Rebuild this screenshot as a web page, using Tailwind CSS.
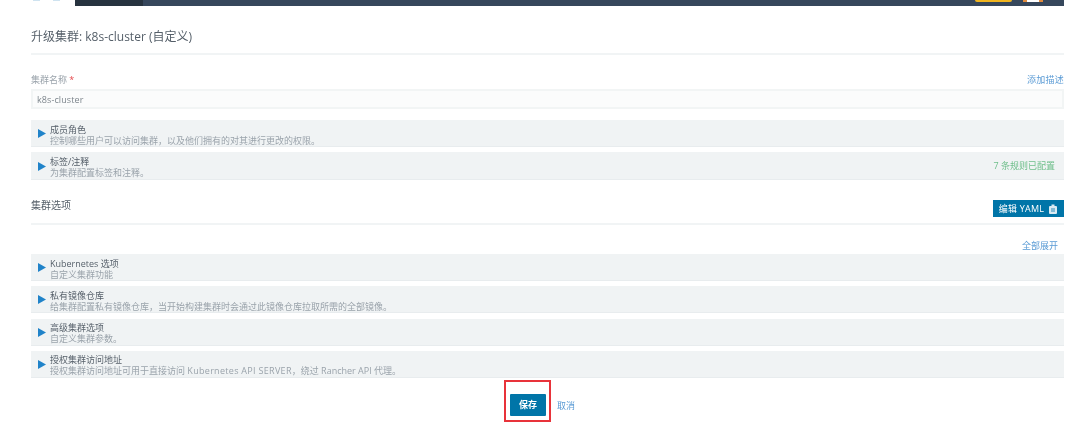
<!DOCTYPE html>
<html lang="en">
<head>
  <meta charset="UTF-8" />
  <title>升级集群</title>
  <script src="https://cdn.jsdelivr.net/npm/@tailwindcss/browser@4"></script>
</head>
<body class="bg-white h-[439px] overflow-hidden font-['Open_Sans','Noto_Sans_CJK_SC',sans-serif] text-[#4b5563]">
<div class="blur-[0.4px]">

  <!-- Top bar -->
  <div class="flex h-[6px]">
    <div class="w-[75px] flex gap-[13px] pl-[33px]">
      <span class="w-[7px] h-[1px] bg-[#cfe3f0]"></span>
      <span class="w-[7px] h-[1px] bg-[#cfe3f0]"></span>
    </div>
    <div class="w-[68px] bg-[#27333f]"></div>
    <div class="w-[921px] bg-[#36475c] flex justify-end pr-[21px] gap-[11px]">
      <span class="w-[37px] h-[2px] bg-[#f0b41e] rounded-b"></span>
      <span class="w-[20px] h-[2px] bg-[#e08a3c] flex justify-center"><span class="w-[12px] bg-white"></span></span>
    </div>
  </div>

  <main class="w-[1033px] ml-[31px]">
    <!-- Title -->
    <div class="h-[49px] pt-[22px] border-b-2 border-[#f1f4f5]">
      <h1 class="text-[12px] leading-[17px] text-[#555f69]">升级集群: k8s-cluster (自定义)</h1>
    </div>

    <!-- Cluster name -->
    <div class="flex justify-between items-center mt-[16px] h-[17px] text-[9px]">
      <span class="text-[#9aa3ab]">集群名称 <span class="text-[#e5484d]">*</span></span>
      <a class="text-[#5a9bd5] tracking-[0.25px]">添加描述</a>
    </div>
    <div class="h-[20px] mt-[1px] px-[4px] border-2 border-[#f2f5f5] bg-[#fbfcfc] text-[9px] leading-[18px] text-[#7d858c] tracking-[0.1px]">k8s-cluster</div>

    <!-- Access sections -->
    <section class="mt-[11px] flex flex-col gap-[5px]">
      <div class="h-[27px] bg-[#f0f3f4] border-b border-[#e8ecee] flex items-center pl-[7px] pt-[3px]">
        <svg class="w-[8px] h-[9px] mr-[4px] mb-[2px] text-[#2083c9]" viewBox="0 0 8 9"><path fill="currentColor" d="M0 0l8 4.5L0 9z"/></svg>
        <div class="text-[9px] leading-[11px]"><div class="text-[#555f69]">成员角色</div><div class="text-[#9aa3ab]">控制哪些用户可以访问集群，以及他们拥有的对其进行更改的权限。</div></div>
      </div>
      <div class="h-[28px] bg-[#f0f3f4] border-b border-[#e8ecee] flex items-center pl-[7px] pt-[3px]">
        <svg class="w-[8px] h-[9px] mr-[4px] mb-[2px] text-[#2083c9]" viewBox="0 0 8 9"><path fill="currentColor" d="M0 0l8 4.5L0 9z"/></svg>
        <div class="text-[9px] leading-[11px]"><div class="text-[#555f69]">标签/注释</div><div class="text-[#9aa3ab]">为集群配置标签和注释。</div></div>
        <span class="ml-auto mr-[9px] mb-[2px] text-[9px] text-[#6fbf8b]">7 条规则已配置</span>
      </div>
    </section>

    <!-- Cluster options -->
    <div class="flex justify-between items-start h-[45px] border-b-2 border-[#f1f4f5]">
      <h2 class="text-[10px] leading-[14px] mt-[18px] text-[#555f69]">集群选项</h2>
      <button class="h-[17px] mt-[20px] w-[71px] bg-[#0075a8] text-white text-[9px] flex items-center justify-center gap-[4px] tracking-[0.2px]">
        <span>编辑 YAML</span>
        <svg class="w-[10px] h-[10px]" viewBox="0 0 10 10"><path fill="currentColor" fill-opacity="0.85" d="M2 2h6a1 1 0 0 1 1 1v6a1 1 0 0 1-1 1H2a1 1 0 0 1-1-1V3a1 1 0 0 1 1-1zM3.5 0.5h3v2h-3z"/><path fill="none" stroke="#0075a8" stroke-width="0.8" d="M3 5h4M3 7h4"/></svg>
      </button>
    </div>
    <div class="flex justify-end h-[29px] pr-[6px] pt-[13px] text-[9px] leading-[16px]"><a class="text-[#5a9bd5]">全部展开</a></div>

    <section class="flex flex-col gap-[5.33px]">
      <div class="h-[27px] bg-[#f0f3f4] border-b border-[#e8ecee] flex items-center pl-[7px] pt-[3px]">
        <svg class="w-[8px] h-[9px] mr-[4px] mb-[2px] text-[#2083c9]" viewBox="0 0 8 9"><path fill="currentColor" d="M0 0l8 4.5L0 9z"/></svg>
        <div class="text-[9px] leading-[11px]"><div class="text-[#555f69]">Kubernetes 选项</div><div class="text-[#9aa3ab]">自定义集群功能</div></div>
      </div>
      <div class="h-[27px] bg-[#f0f3f4] border-b border-[#e8ecee] flex items-center pl-[7px] pt-[3px]">
        <svg class="w-[8px] h-[9px] mr-[4px] mb-[2px] text-[#2083c9]" viewBox="0 0 8 9"><path fill="currentColor" d="M0 0l8 4.5L0 9z"/></svg>
        <div class="text-[9px] leading-[11px]"><div class="text-[#555f69]">私有镜像仓库</div><div class="text-[#9aa3ab]">给集群配置私有镜像仓库，当开始构建集群时会通过此镜像仓库拉取所需的全部镜像。</div></div>
      </div>
      <div class="h-[27px] bg-[#f0f3f4] border-b border-[#e8ecee] flex items-center pl-[7px] pt-[3px]">
        <svg class="w-[8px] h-[9px] mr-[4px] mb-[2px] text-[#2083c9]" viewBox="0 0 8 9"><path fill="currentColor" d="M0 0l8 4.5L0 9z"/></svg>
        <div class="text-[9px] leading-[11px]"><div class="text-[#555f69]">高级集群选项</div><div class="text-[#9aa3ab]">自定义集群参数。</div></div>
      </div>
      <div class="h-[27px] bg-[#f0f3f4] border-b border-[#e8ecee] flex items-center pl-[7px] pt-[3px]">
        <svg class="w-[8px] h-[9px] mr-[4px] mb-[2px] text-[#2083c9]" viewBox="0 0 8 9"><path fill="currentColor" d="M0 0l8 4.5L0 9z"/></svg>
        <div class="text-[9px] leading-[11px]"><div class="text-[#555f69]">授权集群访问地址</div><div class="text-[#9aa3ab]">授权集群访问地址可用于直接访问 <span class="tracking-[0.3px]">Kubernetes API SERVER</span>，绕过 Rancher API 代理。</div></div>
      </div>
    </section>

    <!-- Actions -->
    <div class="flex items-start mt-[2px] ml-[473px]">
      <div class="w-[47px] h-[42px] border-2 border-[#e8333a] pl-[4px] pt-[12px]">
        <button class="block w-[36px] h-[22px] rounded-[1px] bg-[#0075a8] text-white text-[9px] font-semibold">保存</button>
      </div>
      <a class="ml-[6px] mt-[18px] text-[9px] leading-[16px] text-[#5a9bd5]">取消</a>
    </div>
  </main>

</div>
</body>
</html>
